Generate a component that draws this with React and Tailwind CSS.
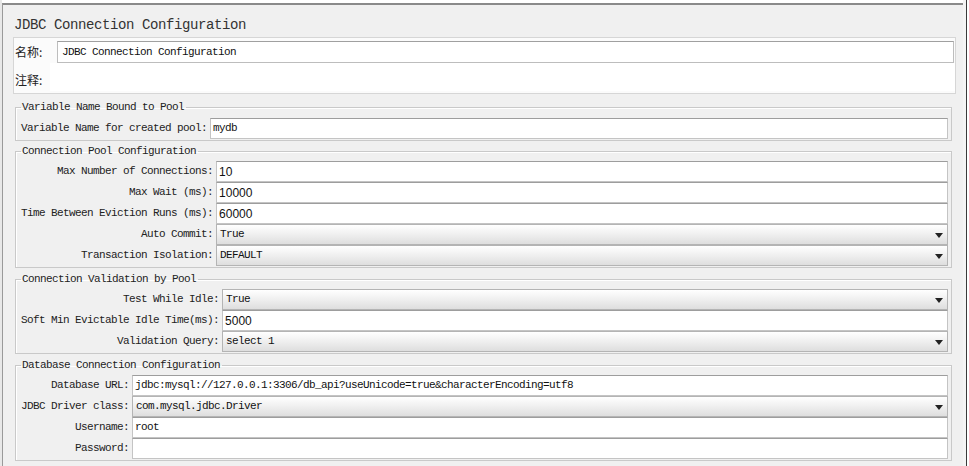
import React from "react";

const mono = "font-['Liberation_Mono','Courier_New',monospace] text-[11px] tracking-[-0.6px]";

function TextField({ value, sans }) {
  return (
    <div className="h-[21px] flex items-center bg-white border border-[#c4c4c4] border-t-[#9d9d9d] pl-[2px]">
      <span className={sans ? "font-['Liberation_Sans',Arial,sans-serif] text-[12px] text-[#111]" : `${mono} text-[#111]`}>
        {value}
      </span>
    </div>
  );
}

function Combo({ value }) {
  return (
    <div className="h-[21px] flex items-center justify-between border border-[#b4b4b4] bg-linear-to-b from-white via-[#efefef] to-[#dedede] pl-[3px] pr-[4px]">
      <span className={`${mono} text-[#111]`}>{value}</span>
      <svg width="8" height="5" viewBox="0 0 8 5" className="mt-[1px]">
        <path d="M0 0h8L4 5z" fill="#222" />
      </svg>
    </div>
  );
}

function Section({ title, rows, spacing }) {
  return (
    <fieldset
      className={`ml-[12px] mr-[11px] border border-[#c9c9c9] shadow-[inset_1px_1px_0_#fff] pl-[5px] pr-[3px] ${spacing}`}
    >
      <legend className={`${mono} leading-[12px] pl-[1px] pr-[2px] text-[#222]`}>{title}</legend>
      <div className="grid grid-cols-[auto_1fr] gap-x-[3px]">
        {rows.map((r) => (
          <React.Fragment key={r.label}>
            <div className={`${mono} h-[21px] flex items-center justify-end whitespace-nowrap text-[#222]`}>{r.label}</div>
            {r.combo ? <Combo value={r.value} /> : <TextField value={r.value} sans={r.sans} />}
          </React.Fragment>
        ))}
      </div>
    </fieldset>
  );
}

const sections = [
  {
    title: "Variable Name Bound to Pool",
    spacing: "mt-[7px] pt-[5px] pb-[1px]",
    rows: [{ label: "Variable Name for created pool:", value: "mydb" }],
  },
  {
    title: "Connection Pool Configuration",
    spacing: "mt-[4px] pt-[4px] pb-[1px]",
    rows: [
      { label: "Max Number of Connections:", value: "10", sans: true },
      { label: "Max Wait (ms):", value: "10000", sans: true },
      { label: "Time Between Eviction Runs (ms):", value: "60000", sans: true },
      { label: "Auto Commit:", value: "True", combo: true },
      { label: "Transaction Isolation:", value: "DEFAULT", combo: true },
    ],
  },
  {
    title: "Connection Validation by Pool",
    spacing: "mt-[5px] pt-[4px] pb-[1px]",
    rows: [
      { label: "Test While Idle:", value: "True", combo: true },
      { label: "Soft Min Evictable Idle Time(ms):", value: "5000", sans: true },
      { label: "Validation Query:", value: "select 1", combo: true },
    ],
  },
  {
    title: "Database Connection Configuration",
    spacing: "mt-[5px] pt-[4px] pb-[1px]",
    rows: [
      { label: "Database URL:", value: "jdbc:mysql://127.0.0.1:3306/db_api?useUnicode=true&characterEncoding=utf8" },
      { label: "JDBC Driver class:", value: "com.mysql.jdbc.Driver", combo: true },
      { label: "Username:", value: "root" },
      { label: "Password:", value: "" },
    ],
  },
];

export default function App() {
  return (
    <div className="w-[969px] h-[466px] bg-white flex overflow-hidden">
      <div className="w-[2px] bg-[#e8e8e8]" />
      <div className="mt-[3px] w-[961px] border-l border-t-2 border-[#8a8a8a] border-l-[#9a9a9a] bg-[#f0f0f0]">
        {/* header */}
        <div className="pt-[12px] pl-[11px] leading-[16px] font-['Liberation_Mono','Courier_New',monospace] text-[14px] tracking-[-0.4px] text-[#333]">
          JDBC Connection Configuration
        </div>

        {/* name / comment */}
        <div className="mt-[4px] ml-[10px] mr-[7px] border border-[#d6d6d6] bg-[#fbfbfb] pt-[3px] pb-[2px]">
          <div className="flex items-center h-[22px]">
            <div className="w-[43px] pl-[1px] font-['Noto_Sans_CJK_SC',sans-serif] text-[12px] text-[#222]">名称:</div>
            <div className="flex-1 mr-[1px] h-[22px] flex items-center bg-white border border-[#bdbdbd] border-t-[#a0a0a0] pl-[4px]">
              <span className={`${mono} text-[#111]`}>JDBC Connection Configuration</span>
            </div>
          </div>
          <div className="flex h-[28px]">
            <div className="w-[36px] pl-[1px] pt-[9px] leading-[16px] font-['Noto_Sans_CJK_SC',sans-serif] text-[12px] text-[#222]">注释:</div>
            <div className="flex-1 h-full bg-white" />
          </div>
        </div>

        {sections.map((s) => (
          <Section key={s.title} title={s.title} rows={s.rows} spacing={s.spacing} />
        ))}
      </div>
      <div className="w-[3px] bg-[#f4f4f4]" />
      <div className="w-px bg-[#3a3a3a]" />
      <div className="flex-1 bg-white" />
    </div>
  );
}
